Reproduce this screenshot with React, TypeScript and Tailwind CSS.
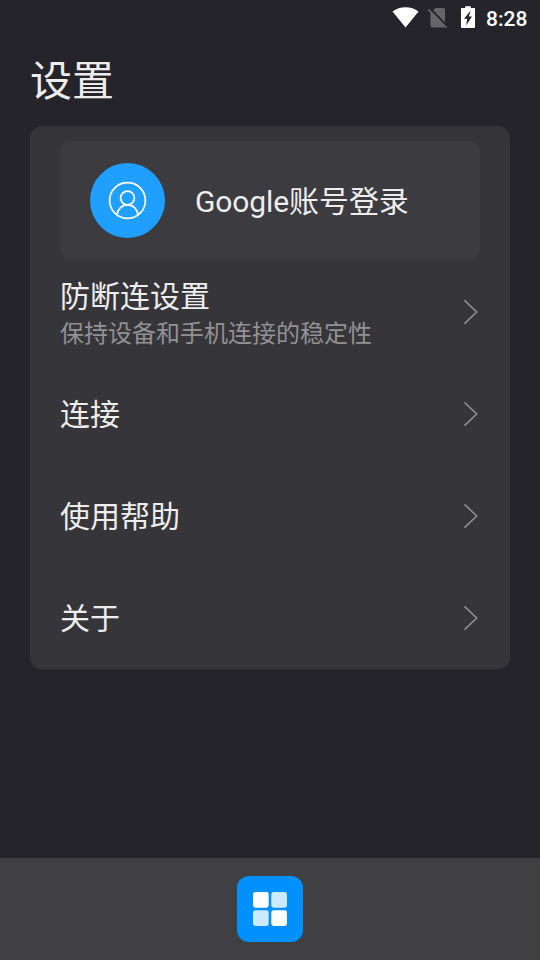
interface SettingItem {
  title: string;
  description?: string;
}

const items: SettingItem[] = [
  { title: '防断连设置', description: '保持设备和手机连接的稳定性' },
  { title: '连接' },
  { title: '使用帮助' },
  { title: '关于' },
];

function StatusBar() {
  return (
    <div className="flex h-9 items-center justify-end pr-3 text-white">
      <svg className="h-9 w-[27px]" viewBox="0 0 27 36" fill="currentColor">
        <path d="M13.5 27.5 0.5 11.4C4.1 8.7 8.6 7.2 13.5 7.2s9.4 1.5 13 4.2L13.5 27.5Z" />
      </svg>
      <svg className="ml-[7px] h-9 w-[22px]" viewBox="0 0 22 36" fill="none">
        <path d="M9.5 8H17a2 2 0 0 1 2 2v15.5a2 2 0 0 1-2 2H6.5a2 2 0 0 1-2-2V13L9.5 8Z" fill="#66656a" />
        <path d="m3.4 7.8 18 18.4" stroke="#25242a" strokeWidth="2" />
        <path d="m2.2 9.4 18.3 18.5" stroke="#66656a" strokeWidth="1.8" />
      </svg>
      <svg className="ml-3 h-9 w-4" viewBox="0 0 16 36">
        <path d="M5.2 6.2h5.6V8H14c.6 0 1 .4 1 1v18c0 .6-.4 1-1 1H2c-.6 0-1-.4-1-1V9c0-.6.4-1 1-1h3.2V6.2Z" fill="currentColor" />
        <path d="M10 11.2 4 18.8h3.2L6.2 25.3 12 16.6H8.8L10.5 11.2Z" fill="#25242a" />
      </svg>
      <span className="ml-2.5 w-[42px] pt-0.5 text-[21px] leading-none font-medium">8:28</span>
    </div>
  );
}

function LoginCard() {
  return (
    <div className="flex h-[120px] items-start rounded-xl bg-[#3c3b3f] pt-[22px] pl-[30px]">
      <div className="flex size-[75px] items-center justify-center rounded-full bg-[#1f9fff]">
        <svg className="size-[39px]" viewBox="0 0 39 39" fill="none" stroke="white" strokeWidth="1.7">
          <circle cx="19.5" cy="19.5" r="17.9" />
          <circle cx="19.5" cy="17" r="6.9" />
          <path d="M9 34C9.4 28.2 13.6 23.9 19.5 23.9S29.6 28.2 30 34" />
        </svg>
      </div>
      <span className="mt-[21px] ml-[30px] text-[30px] leading-9 tracking-[-0.1px]">Google账号登录</span>
    </div>
  );
}

function SettingRow({ title, description }: SettingItem) {
  return (
    <div className="flex h-[102px] items-center justify-between">
      <div className={description ? 'pt-[7px]' : 'pt-0.5'}>
        <div className="text-[30px] leading-9">{title}</div>
        {description && (
          <div className="pt-px text-2xl leading-9 text-[#929194]">{description}</div>
        )}
      </div>
      <svg className="h-7 w-[18px]" viewBox="0 0 18 28" fill="none" stroke="#8e8d90" strokeWidth="1.6">
        <path d="m2.5 2.3 12.2 11.7L2.5 25.7" />
      </svg>
    </div>
  );
}

export default function App() {
  return (
    <div className="flex h-[960px] w-[540px] flex-col bg-[#25242a] font-[Roboto,'Noto_Sans_CJK_SC',sans-serif] text-[#ededed]">
      <StatusBar />
      <h1 className="flex h-[90px] items-center pt-0.5 pl-[30px] text-[42px] leading-none">设置</h1>
      <main className="mx-[30px] rounded-xl bg-[#363539] px-[30px] pt-[15px]">
        <LoginCard />
        {items.map((item) => (
          <SettingRow key={item.title} {...item} />
        ))}
      </main>
      <nav className="mt-auto flex h-[102px] items-center justify-center bg-[#404042]">
        <div className="flex size-[66px] items-center justify-center rounded-xl bg-[#0091ff]">
          <svg className="size-[34px]" viewBox="0 0 34 34">
            <rect width="15.7" height="15.7" rx="2.4" fill="white" />
            <rect x="18.3" width="15.7" height="15.7" rx="2.4" fill="#cce9ff" />
            <rect y="18.3" width="15.7" height="15.7" rx="2.4" fill="#cce9ff" />
            <rect x="18.3" y="18.3" width="15.7" height="15.7" rx="2.4" fill="white" />
          </svg>
        </div>
      </nav>
    </div>
  );
}
